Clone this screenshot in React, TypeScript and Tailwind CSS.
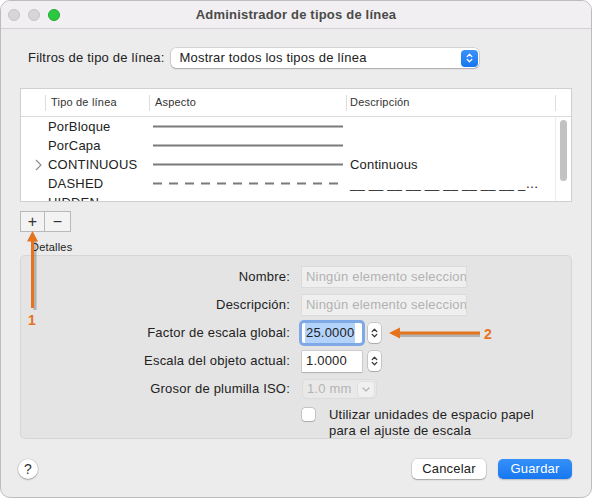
import React from "react";

const rows = [
  { name: "PorBloque", dash: false, desc: "" },
  { name: "PorCapa", dash: false, desc: "" },
  { name: "CONTINUOUS", dash: false, desc: "Continuous", current: true },
  { name: "DASHED", dash: true, desc: "__ __ __ __ __ __ __ __ __ __ __ __ __ __ __ __" },
  { name: "HIDDEN", dash: true, desc: "" },
];

function UpDown({ color, w = 7, h = 12 }: { color: string; w?: number; h?: number }) {
  return (
    <svg width={w} height={h} viewBox="0 0 7 12" fill="none" aria-hidden="true">
      <path d="M1.2 4.6 L3.5 2.3 L5.8 4.6" stroke={color} strokeWidth="1.3" strokeLinecap="round" strokeLinejoin="round" />
      <path d="M1.2 7.4 L3.5 9.7 L5.8 7.4" stroke={color} strokeWidth="1.3" strokeLinecap="round" strokeLinejoin="round" />
    </svg>
  );
}

function Stepper() {
  return (
    <div className="ml-[6px] flex h-[20px] w-[13px] items-center justify-center rounded-[4px] bg-white shadow-[0_0_0_0.5px_rgba(0,0,0,0.25),0_1px_1px_rgba(0,0,0,0.15)]">
      <UpDown color="#3a3a3a" />
    </div>
  );
}

function FormRow({ label, children }: { label: string; children: React.ReactNode }) {
  return (
    <div className="flex h-[20px] items-center">
      <span className="w-[269px] text-right">{label}</span>
      <div className="ml-[12px] flex items-center">{children}</div>
    </div>
  );
}

export default function App() {
  return (
    <div className="relative flex h-[498px] w-[592px] flex-col overflow-hidden rounded-[10px] border border-[#bdbdbd] bg-[#ececec] text-[13px] tracking-[0.2px] text-[#222] [font-family:'Liberation_Sans',Arial,sans-serif]">
      {/* Title bar */}
      <div className="grid h-[28px] shrink-0 grid-cols-[1fr_auto_1fr] items-center border-b border-[#d2d2d2] bg-[#f1eff1]">
        <div className="flex items-center gap-[8px] pl-[7px]">
          <span className="block h-[12px] w-[12px] rounded-full border border-[#c4c4c4] bg-[#d6d6d6]" />
          <span className="block h-[12px] w-[12px] rounded-full border border-[#c4c4c4] bg-[#d6d6d6]" />
          <span className="block h-[12px] w-[12px] rounded-full border border-[#1ea934] bg-[#2cc840]" />
        </div>
        <span className="text-[13px] font-bold text-[#4a4a4a]">Administrador de tipos de línea</span>
        <div />
      </div>

      {/* Filter */}
      <div className="mt-[19px] flex items-center gap-[6px] pl-[27px]">
        <span>Filtros de tipo de línea:</span>
        <div className="flex h-[20px] w-[308px] items-center justify-between rounded-[5px] bg-white pl-[9px] pr-[1px] shadow-[0_0_0_0.5px_rgba(0,0,0,0.2),0_1px_1.5px_rgba(0,0,0,0.2)]">
          <span>Mostrar todos los tipos de línea</span>
          <span className="flex h-[17px] w-[17px] items-center justify-center rounded-[4px] bg-gradient-to-b from-[#3a92f8] to-[#1577f0]">
            <UpDown color="#ffffff" />
          </span>
        </div>
      </div>

      {/* Table */}
      <div className="mx-[19px] mt-[20px] flex h-[114px] shrink-0 flex-col border border-[#cfcfcf] bg-white">
        <div className="grid h-[28px] shrink-0 grid-cols-[24px_104px_197px_209px_1fr] items-center border-b border-[#dcdcdc] text-[11px] text-[#333]">
          <div />
          <div className="flex h-[16px] items-center border-l border-[#dedede] pl-[5px]">Tipo de línea</div>
          <div className="flex h-[16px] items-center border-l border-[#dedede] pl-[5px]">Aspecto</div>
          <div className="flex h-[16px] items-center border-l border-[#dedede] pl-[3px]">Descripción</div>
          <div className="h-[16px] border-l border-[#dedede]" />
        </div>
        <div className="flex min-h-0 flex-1">
          <div className="min-w-0 flex-1 overflow-hidden">
            {rows.map((r) => (
              <div key={r.name} className="grid h-[19px] grid-cols-[24px_104px_197px_209px] items-center">
                <div className="flex justify-end pr-[3px]">
                  {r.current && (
                    <svg width="7" height="12" viewBox="0 0 7 12" fill="none" aria-hidden="true">
                      <path d="M1 1 L6 6 L1 11" stroke="#8a8a8a" strokeWidth="1.1" />
                    </svg>
                  )}
                </div>
                <div className="pl-[3px]">{r.name}</div>
                <div className="pl-[4px]">
                  <svg width="190" height="3" viewBox="0 0 190 3" aria-hidden="true">
                    <line
                      x1="0"
                      y1="1.5"
                      x2="190"
                      y2="1.5"
                      stroke="#7a7a7a"
                      strokeWidth="1.8"
                      strokeDasharray={r.dash ? "9 7" : undefined}
                    />
                  </svg>
                </div>
                <div className="truncate pl-[4px] pr-[14px]">{r.desc}</div>
              </div>
            ))}
          </div>
          <div className="flex w-[16px] shrink-0 justify-center border-l border-[#ececec] pt-[3px]">
            <span className="block h-[61px] w-[7px] rounded-full bg-[#c2c2c2]" />
          </div>
        </div>
      </div>

      {/* + / - */}
      <div className="ml-[19px] mt-[9px] flex h-[21px] w-[51px] border border-[#b9b9b9] bg-[#f3f3f3] text-[16px] leading-none text-[#333]">
        <span className="flex w-[24px] items-center justify-center border-r border-[#b9b9b9]">+</span>
        <span className="flex flex-1 items-center justify-center">−</span>
      </div>

      {/* Details */}
      <div className="mt-[8px] pl-[30px] text-[11px] leading-[14px]">Detalles</div>
      <div className="mx-[19px] mt-[1px] flex h-[184px] shrink-0 flex-col gap-[8px] rounded-[5px] border border-[#d6d6d6] bg-[#e4e4e4] pt-[11px]">
        <FormRow label="Nombre:">
          <div className="flex h-[20px] w-[164px] items-center overflow-hidden whitespace-nowrap bg-[#efefef] pl-[4px] text-[#b2b2b2] shadow-[0_0_0_0.5px_rgba(0,0,0,0.08)]">
            Ningún elemento seleccionado
          </div>
        </FormRow>
        <FormRow label="Descripción:">
          <div className="flex h-[20px] w-[164px] items-center overflow-hidden whitespace-nowrap bg-[#efefef] pl-[4px] text-[#b2b2b2] shadow-[0_0_0_0.5px_rgba(0,0,0,0.08)]">
            Ningún elemento seleccionado
          </div>
        </FormRow>
        <FormRow label="Factor de escala global:">
          <div className="flex h-[20px] w-[60px] items-center rounded-[2px] bg-white pl-[3px] shadow-[0_0_0_3px_#7fa8e6]">
            <span className="bg-[#b3d3fb] px-[1px]">25.0000</span>
          </div>
          <Stepper />
        </FormRow>
        <FormRow label="Escala del objeto actual:">
          <div className="flex h-[21px] w-[60px] items-center bg-white pl-[4px] shadow-[0_0_0_0.5px_rgba(0,0,0,0.2),0_1px_1px_rgba(0,0,0,0.12)]">
            1.0000
          </div>
          <Stepper />
        </FormRow>
        <FormRow label="Grosor de plumilla ISO:">
          <div className="flex h-[20px] w-[75px] items-center justify-between rounded-[5px] border border-[#dcdcdc] bg-[#e9e9e9] pl-[4px] pr-[2px] text-[#b4b4b4]">
            <span>1.0 mm</span>
            <span className="flex h-[15px] w-[16px] items-center justify-center rounded-[3px] bg-[#f0f0f0] shadow-[0_0_0_0.5px_rgba(0,0,0,0.08)]">
              <svg width="8" height="5" viewBox="0 0 8 5" fill="none" aria-hidden="true">
                <path d="M1 1 L4 4 L7 1" stroke="#b0b0b0" strokeWidth="1.2" strokeLinecap="round" />
              </svg>
            </span>
          </div>
        </FormRow>
        <div className="flex items-start">
          <span className="w-[281px] shrink-0" />
          <span className="mt-[1px] block h-[13px] w-[13px] shrink-0 rounded-[3px] bg-white shadow-[0_0_0_0.5px_rgba(0,0,0,0.25),0_0.5px_1px_rgba(0,0,0,0.15)]" />
          <span className="ml-[14px] leading-[16px]">
            Utilizar unidades de espacio papel
            <br />
            para el ajuste de escala
          </span>
        </div>
      </div>

      {/* Bottom buttons */}
      <div className="mt-[20px] flex items-center pl-[17px] pr-[19px]">
        <span className="flex h-[20px] w-[20px] items-center justify-center rounded-full bg-white text-[14px] text-[#333] shadow-[0_0_0_0.5px_rgba(0,0,0,0.15),0_1px_1.5px_rgba(0,0,0,0.25)]">
          ?
        </span>
        <span className="ml-auto flex h-[20px] w-[74px] items-center justify-center rounded-[5px] bg-white shadow-[0_0_0_0.5px_rgba(0,0,0,0.15),0_1px_1.5px_rgba(0,0,0,0.25)]">
          Cancelar
        </span>
        <span className="ml-[12px] flex h-[20px] w-[74px] items-center justify-center rounded-[5px] bg-gradient-to-b from-[#3590f8] to-[#1677f1] text-white shadow-[0_1px_1.5px_rgba(0,0,0,0.2)]">
          Guardar
        </span>
      </div>

      {/* Annotation arrows */}
      <svg className="pointer-events-none absolute left-0 top-0" width="592" height="498" viewBox="0 0 592 498" aria-hidden="true">
        <line x1="34" y1="240" x2="34" y2="309" stroke="#000" strokeOpacity="0.22" strokeWidth="3" />
        <line x1="31.5" y1="239" x2="31.5" y2="307" stroke="#e6731d" strokeWidth="3" />
        <path d="M31.5 230 L37 240.5 L26 240.5 Z" fill="#e6731d" />
        <line x1="398" y1="334.5" x2="479" y2="334.5" stroke="#000" strokeOpacity="0.22" strokeWidth="3" />
        <line x1="397" y1="332" x2="479" y2="332" stroke="#e6731d" strokeWidth="3" />
        <path d="M388 332 L399 326.5 L399 337.5 Z" fill="#e6731d" />
      </svg>
      <span className="pointer-events-none absolute left-[27px] top-[309px] text-[14px] font-bold text-[#e6731d]">1</span>
      <span className="pointer-events-none absolute left-[483px] top-[323px] text-[14px] font-bold text-[#e6731d]">2</span>
    </div>
  );
}
